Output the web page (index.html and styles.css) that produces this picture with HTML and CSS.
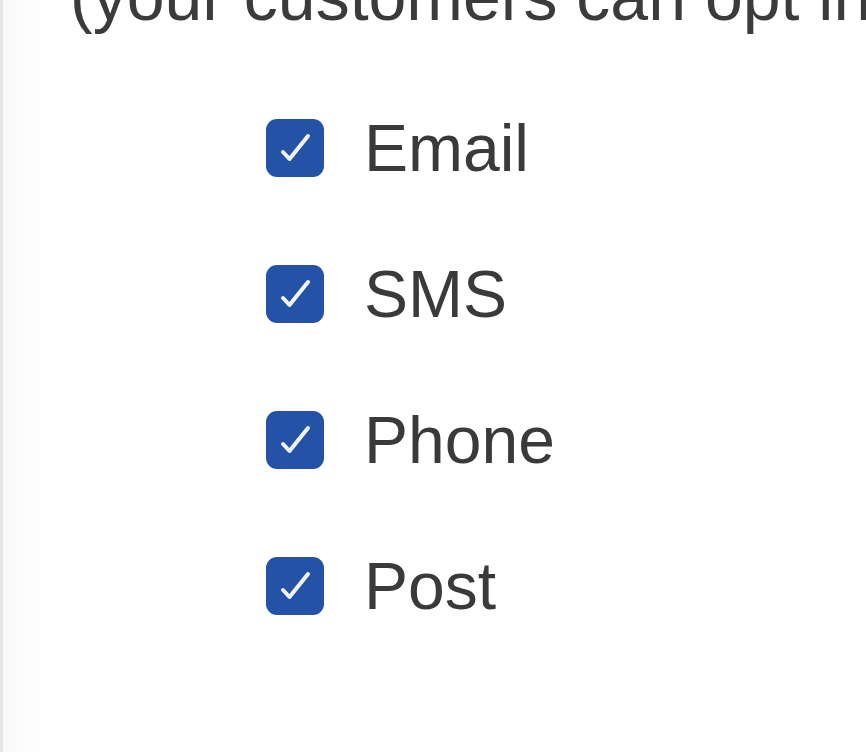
FILE: index.html
```html
<!DOCTYPE html>
<html lang="en">
<head>
  <meta charset="UTF-8">
  <title>Contact preferences</title>
  <link rel="stylesheet" href="styles.css">
</head>
<body>
  <div class="panel">
    <p class="hint">(your customers can opt in</p>
    <ul class="channels">
      <li class="channel">
        <span class="box"><svg viewBox="0 0 58 58"><path d="M17 33 L23.5 40 L42 17"/></svg></span>
        <span class="label">Email</span>
      </li>
      <li class="channel">
        <span class="box"><svg viewBox="0 0 58 58"><path d="M17 33 L23.5 40 L42 17"/></svg></span>
        <span class="label">SMS</span>
      </li>
      <li class="channel">
        <span class="box"><svg viewBox="0 0 58 58"><path d="M17 33 L23.5 40 L42 17"/></svg></span>
        <span class="label">Phone</span>
      </li>
      <li class="channel">
        <span class="box"><svg viewBox="0 0 58 58"><path d="M17 33 L23.5 40 L42 17"/></svg></span>
        <span class="label">Post</span>
      </li>
    </ul>
  </div>
</body>
</html>
```

FILE: styles.css
```css
/* Page */
body {
  margin: 0;
  background: #ffffff;
  font-family: 'Liberation Sans', Arial, sans-serif;
  overflow: hidden;
}
.panel {
  display: flow-root;
  height: 752px;
  border-left: 3px solid #e6e6e6;
  background: linear-gradient(to right, #f9f9f9, #ffffff 40px);
}
/* Intro line, cut off by the top of the view */
.hint {
  margin: -46px 0 0 67px;
  font-size: 68px;
  line-height: 84px;
  color: #3b3b3b;
  white-space: nowrap;
}
/* Checkbox list */
.channels {
  list-style: none;
  margin: 37px 0 0;
  padding: 0 0 0 263px;
}
.channel {
  display: flex;
  align-items: center;
  gap: 40px;
  height: 146px;
}
.box {
  width: 58px;
  height: 58px;
  border-radius: 11px;
  background: #2352a6;
  display: flex;
}
.box svg {
  width: 58px;
  height: 58px;
  fill: none;
  stroke: #f4f6fb;
  stroke-width: 4;
  stroke-linecap: round;
  stroke-linejoin: round;
}
.label {
  font-size: 66px;
  color: #3a3a3a;
}
```
